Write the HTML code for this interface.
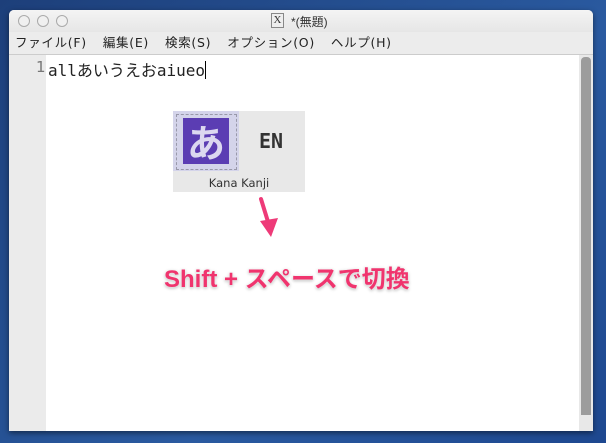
<!DOCTYPE html>
<html><head><meta charset="utf-8"><style>
body{margin:0;width:606px;height:443px;overflow:hidden;background:linear-gradient(135deg,#1d3f7a,#2a5aa0 60%,#1e4890);font-family:"Liberation Sans","Noto Sans CJK JP",sans-serif;position:relative}
.win{position:absolute;left:9px;top:10px;width:584px;height:421px;background:#fff;border-radius:5px 5px 0 0;box-shadow:0 2px 6px rgba(0,0,0,.5);overflow:hidden}
.title{height:22px;background:linear-gradient(#f4f4f4,#e6e6e6);position:relative;font-size:12px;color:#333}
.dot{position:absolute;top:5px;width:10px;height:10px;border:1px solid #aaa;border-radius:50%;background:#f0f0f0}
.menu{height:22px;background:#ececec;border-bottom:1px solid #ccc;font-size:12.5px;color:#222;line-height:22px;padding-left:6px;font-family:"DejaVu Sans","Noto Sans CJK JP",sans-serif;letter-spacing:.7px}
.menu span{margin-right:16px}
.gut{position:absolute;left:0;top:45px;width:37px;bottom:0;background:#ebebeb}
.sb{position:absolute;right:2px;top:47px;width:10px;bottom:16px;background:#9c9c9c;border-radius:4px 4px 0 0}
.sbt{position:absolute;right:0;top:45px;width:14px;bottom:0;background:#e8e8e8}
</style></head><body>
<div class="win">
 <div class="title">
  <div class="dot" style="left:9px"></div><div class="dot" style="left:28px"></div><div class="dot" style="left:47px"></div>
  <div style="position:absolute;left:262px;top:3px;width:11px;height:13px;border:1px solid #888;background:#eee;font-size:11px;line-height:13px;text-align:center;font-family:'Liberation Serif',serif">X</div>
  <div style="position:absolute;left:282px;top:3px">*(無題)</div>
 </div>
 <div class="menu"><span>ファイル(F)</span><span>編集(E)</span><span>検索(S)</span><span>オプション(O)</span><span>ヘルプ(H)</span></div>
 <div class="gut"></div>
 <div class="sbt"></div><div class="sb"></div>
 <div style="position:absolute;left:27px;top:48px;font-size:15px;color:#777;font-family:'DejaVu Sans',sans-serif">1</div>
 <div style="position:absolute;left:39px;top:47px;font-size:16px;color:#222;font-family:'DejaVu Sans Mono','Noto Sans CJK JP',monospace">allあいうえおaiueo<span style="display:inline-block;width:1px;height:18px;background:#000;vertical-align:-3px"></span></div>
</div>
<div style="position:absolute;left:173px;top:111px;width:132px;height:81px;background:#e8e8e8"></div>
<div style="position:absolute;left:173px;top:111px;width:66px;height:60px;background:#d4d4ea"></div>
<div style="position:absolute;left:176px;top:114px;width:59px;height:54px;border:1px dashed #99a"></div>
<div style="position:absolute;left:183px;top:118px;width:46px;height:46px;background:#5b3db3;color:#dcd8f0;font-size:38px;line-height:46px;text-align:center;font-family:'Noto Sans CJK JP',sans-serif;font-weight:bold">あ</div>
<div style="position:absolute;left:259px;top:129px;font-size:20px;font-weight:bold;color:#333;font-family:'DejaVu Sans Mono',monospace">EN</div>
<div style="position:absolute;left:173px;top:176px;width:132px;text-align:center;font-size:11.5px;color:#333;font-family:'DejaVu Sans',sans-serif">Kana Kanji</div>
<svg style="position:absolute;left:255px;top:195px" width="30" height="50"><path d="M6 4 L14 30" stroke="#ee3a78" stroke-width="4" stroke-linecap="round"/><path d="M5 26 L16 42 L23 23 Z" fill="#ee3a78"/></svg>
<div style="position:absolute;left:164px;top:259px;font-size:24px;font-weight:bold;color:#f0346e;text-shadow:0 0 3px #fff,0 1px 3px rgba(0,0,0,.4);font-family:'Liberation Sans','Noto Sans CJK JP',sans-serif">Shift + スペースで切換</div>
</body></html>
